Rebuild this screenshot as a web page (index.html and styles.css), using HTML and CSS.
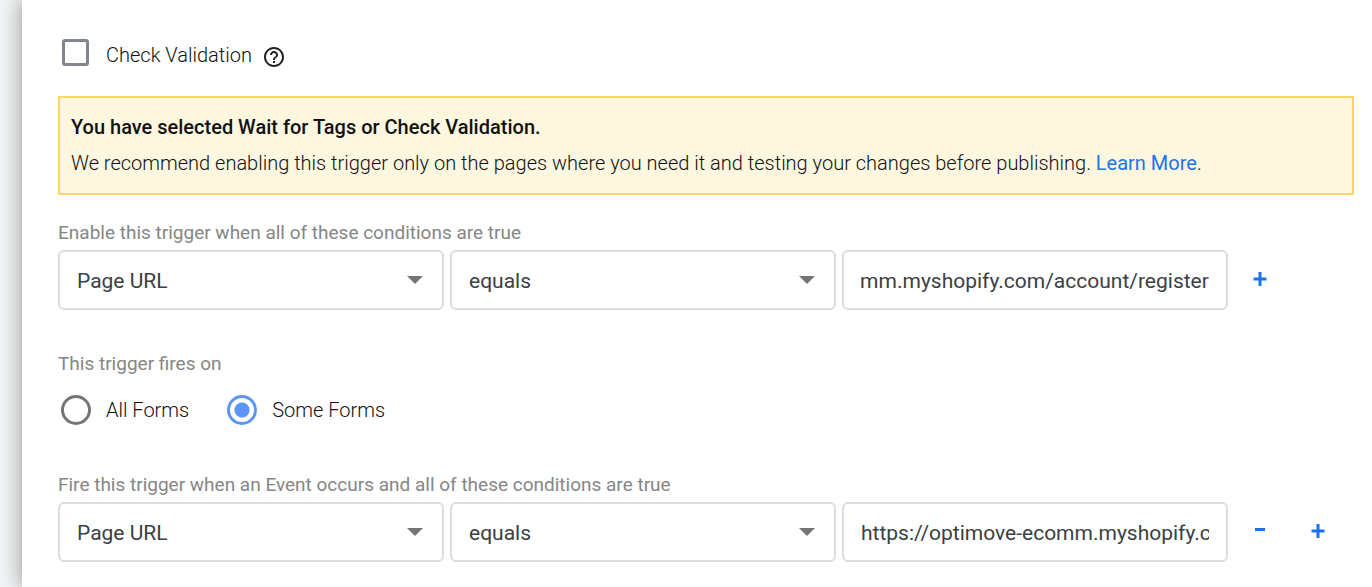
FILE: index.html
```html
<!DOCTYPE html>
<html lang="en">
<head>
<meta charset="utf-8">
<title>Trigger Configuration</title>
<link rel="stylesheet" href="styles.css">
</head>
<body>
<main class="panel">
  <div class="option">
    <input class="checkbox" type="checkbox" id="check-validation">
    <label class="option-label" for="check-validation">Check Validation</label>
    <button class="help" type="button" aria-label="Help">
      <svg viewBox="0 0 24 24" width="24" height="24" fill="#202124" aria-hidden="true"><path d="M11 18h2v-2h-2v2zm1-16C6.480 2 2 6.480 2 12s4.480 10 10 10 10-4.480 10-10S17.520 2 12 2zm0 18c-4.410 0-8-3.590-8-8s3.590-8 8-8 8 3.590 8 8-3.590 8-8 8zm0-14c-2.210 0-4 1.790-4 4h2c0-1.100.9-2 2-2s2 .9 2 2c0 2-3 1.750-3 5h2c0-2.250 3-2.500 3-5 0-2.210-1.790-4-4-4z"/></svg>
    </button>
  </div>

  <section class="notice">
    <strong class="notice-title">You have selected Wait for Tags or Check Validation.</strong>
    <p class="notice-text">We recommend enabling this trigger only on the pages where you need it and testing your changes before publishing. <a class="link" href="#">Learn More</a>.</p>
  </section>

  <section class="group">
    <h2 class="group-label">Enable this trigger when all of these conditions are true</h2>
    <div class="condition">
      <select class="field select" aria-label="Variable"><option>Page URL</option></select>
      <select class="field select" aria-label="Operator"><option>equals</option></select>
      <input class="field" id="enable-value" type="text" aria-label="Value" value="https://optimove-ecomm.myshopify.com/account/register">
      <div class="actions">
        <button class="action" type="button" aria-label="Add condition"><svg viewBox="0 0 14 14" width="14" height="14" aria-hidden="true"><path d="M0.500 7h13M7 0v14" stroke="#1a73e8" stroke-width="3"/></svg></button>
      </div>
    </div>
  </section>

  <fieldset class="group fires">
    <legend class="group-label">This trigger fires on</legend>
    <div class="radios">
      <label class="radio-label"><input class="radio" type="radio" name="fires">All Forms</label>
      <label class="radio-label"><input class="radio" type="radio" name="fires" checked>Some Forms</label>
    </div>
  </fieldset>

  <section class="group">
    <h2 class="group-label">Fire this trigger when an Event occurs and all of these conditions are true</h2>
    <div class="condition">
      <select class="field select" aria-label="Variable"><option>Page URL</option></select>
      <select class="field select" aria-label="Operator"><option>equals</option></select>
      <input class="field" type="text" aria-label="Value" value="https://optimove-ecomm.myshopify.com/account/register">
      <div class="actions">
        <button class="action" type="button" aria-label="Remove condition"><svg viewBox="0 0 14 14" width="14" height="14" aria-hidden="true"><path d="M2 5.500h10" stroke="#1a73e8" stroke-width="3"/></svg></button>
        <button class="action" type="button" aria-label="Add condition"><svg viewBox="0 0 14 14" width="14" height="14" aria-hidden="true"><path d="M0.500 7h13M7 0v14" stroke="#1a73e8" stroke-width="3"/></svg></button>
      </div>
    </div>
  </section>
</main>
<script src="script.js"></script>
</body>
</html>
```

FILE: styles.css
```css
* {
  box-sizing: border-box;
}

body {
  margin: 0;
  min-height: 100vh;
  display: flex;
  padding-left: 22px;
  overflow: hidden;
  background: #f1f3f4;
  color: #111;
  font-family: Roboto, sans-serif;
  font-size: 20px;
  font-weight: 300;
  line-height: 24px;
}

.panel {
  flex: 1;
  min-width: 0;
  padding: 39px 18px 24px 36px;
  background: #fff;
  box-shadow: 0 0 20px rgba(0, 0, 0, 0.4);
}

.option {
  display: flex;
  align-items: flex-start;
  padding-left: 4px;
}

.checkbox {
  appearance: none;
  width: 27px;
  height: 27px;
  margin: 0;
  border: 3px solid #80868b;
  border-radius: 3px;
  background: #fff;
}

.option-label {
  padding: 4px 10px 0 17px;
}

.help {
  display: flex;
  margin: 6px 0 0;
  padding: 0;
  border: 0;
  background: none;
}

.notice {
  margin-top: 27px;
  padding: 11px 11px 12px;
  border: 2px solid #fdd663;
  background: #fef7e0;
}

.notice-title {
  display: block;
  font-weight: 500;
  line-height: 36px;
}

.notice-text {
  margin: 0;
  line-height: 36px;
}

.link {
  color: #1a73e8;
  font-weight: 400;
  text-decoration: none;
}

.group {
  margin: 26px 0 0;
  padding: 0;
  border: 0;
}

.group-label {
  margin: 0;
  padding: 0;
  color: #868686;
  font-size: 19px;
  font-weight: 400;
  line-height: 24px;
}

.condition {
  display: flex;
  gap: 6px;
  margin-top: 5px;
}

.field {
  flex: 1;
  min-width: 0;
  height: 60px;
  margin: 0;
  padding: 2px 17px 0;
  border: 2px solid #dadce0;
  border-radius: 6px;
  background: #fff;
  color: #3c4043;
  font: inherit;
  font-size: 21px;
  font-weight: 400;
}

.select {
  appearance: none;
  background: #fff url("data:image/svg+xml,%3Csvg xmlns='http://www.w3.org/2000/svg' width='16' height='8'%3E%3Cpath d='M0 0h16L8 8z' fill='%23757575'/%3E%3C/svg%3E") no-repeat right 19px center;
}

.actions {
  display: flex;
  flex: 0 0 120px;
  gap: 6px;
}

.action {
  display: flex;
  align-items: center;
  justify-content: center;
  width: 52px;
  padding: 0 0 2px;
  border: 0;
  background: none;
}

.fires {
  margin-top: 42px;
}

.radios {
  display: flex;
  gap: 38px;
  padding: 19px 0 22px 3px;
}

.radio-label {
  display: flex;
  align-items: center;
  gap: 15px;
}

.radio {
  appearance: none;
  width: 30px;
  height: 30px;
  margin: 0;
  border: 3px solid #757575;
  border-radius: 50%;
  background: #fff;
}

.radio:checked {
  border-color: #5b95f5;
  background: radial-gradient(circle, #5b95f5 7px, #fff 8px);
}
```

FILE: script.js
```js
const enableValue = document.getElementById("enable-value");
enableValue.scrollLeft = enableValue.scrollWidth;
```
